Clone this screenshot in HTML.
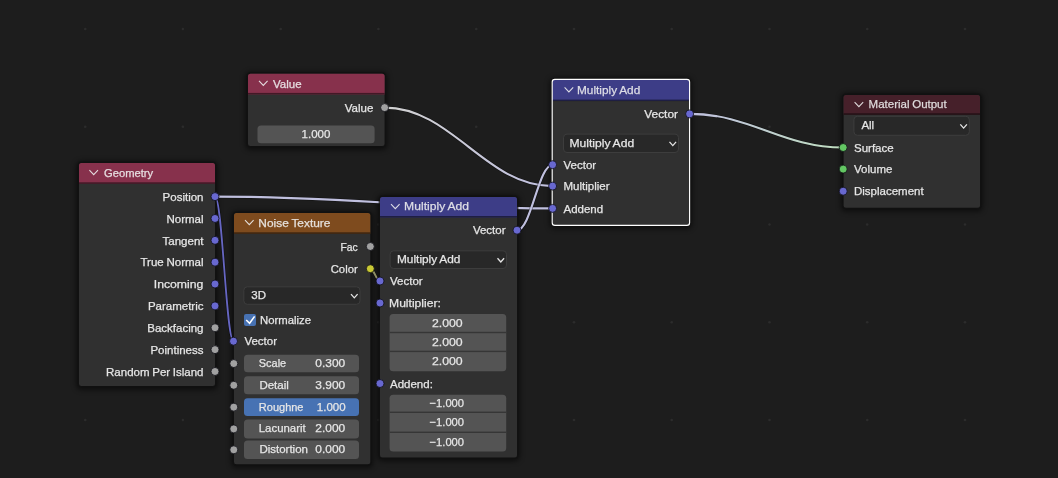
<!DOCTYPE html>
<html><head><meta charset="utf-8"><style>
html,body{margin:0;padding:0;background:#1d1d1d;width:1058px;height:478px;overflow:hidden}
svg{display:block}
</style></head><body>
<svg width="1058" height="478" viewBox="0 0 1058 478" font-family='"Liberation Sans", sans-serif'>
<defs><filter id="sh" x="-20%" y="-20%" width="140%" height="140%"><feGaussianBlur stdDeviation="2.5"/></filter></defs>
<rect width="1058" height="478" fill="#1d1d1d"/>
<circle cx="85.2" cy="29.0" r="1.3" fill="#2c2c2c"/><circle cx="85.2" cy="126.8" r="1.3" fill="#2c2c2c"/><circle cx="85.2" cy="224.5" r="1.3" fill="#2c2c2c"/><circle cx="85.2" cy="322.2" r="1.3" fill="#2c2c2c"/><circle cx="85.2" cy="420.0" r="1.3" fill="#2c2c2c"/><circle cx="182.9" cy="29.0" r="1.3" fill="#2c2c2c"/><circle cx="182.9" cy="126.8" r="1.3" fill="#2c2c2c"/><circle cx="182.9" cy="224.5" r="1.3" fill="#2c2c2c"/><circle cx="182.9" cy="322.2" r="1.3" fill="#2c2c2c"/><circle cx="182.9" cy="420.0" r="1.3" fill="#2c2c2c"/><circle cx="280.7" cy="29.0" r="1.3" fill="#2c2c2c"/><circle cx="280.7" cy="126.8" r="1.3" fill="#2c2c2c"/><circle cx="280.7" cy="224.5" r="1.3" fill="#2c2c2c"/><circle cx="280.7" cy="322.2" r="1.3" fill="#2c2c2c"/><circle cx="280.7" cy="420.0" r="1.3" fill="#2c2c2c"/><circle cx="378.4" cy="29.0" r="1.3" fill="#2c2c2c"/><circle cx="378.4" cy="126.8" r="1.3" fill="#2c2c2c"/><circle cx="378.4" cy="224.5" r="1.3" fill="#2c2c2c"/><circle cx="378.4" cy="322.2" r="1.3" fill="#2c2c2c"/><circle cx="378.4" cy="420.0" r="1.3" fill="#2c2c2c"/><circle cx="476.2" cy="29.0" r="1.3" fill="#2c2c2c"/><circle cx="476.2" cy="126.8" r="1.3" fill="#2c2c2c"/><circle cx="476.2" cy="224.5" r="1.3" fill="#2c2c2c"/><circle cx="476.2" cy="322.2" r="1.3" fill="#2c2c2c"/><circle cx="476.2" cy="420.0" r="1.3" fill="#2c2c2c"/><circle cx="574.0" cy="29.0" r="1.3" fill="#2c2c2c"/><circle cx="574.0" cy="126.8" r="1.3" fill="#2c2c2c"/><circle cx="574.0" cy="224.5" r="1.3" fill="#2c2c2c"/><circle cx="574.0" cy="322.2" r="1.3" fill="#2c2c2c"/><circle cx="574.0" cy="420.0" r="1.3" fill="#2c2c2c"/><circle cx="671.7" cy="29.0" r="1.3" fill="#2c2c2c"/><circle cx="671.7" cy="126.8" r="1.3" fill="#2c2c2c"/><circle cx="671.7" cy="224.5" r="1.3" fill="#2c2c2c"/><circle cx="671.7" cy="322.2" r="1.3" fill="#2c2c2c"/><circle cx="671.7" cy="420.0" r="1.3" fill="#2c2c2c"/><circle cx="769.5" cy="29.0" r="1.3" fill="#2c2c2c"/><circle cx="769.5" cy="126.8" r="1.3" fill="#2c2c2c"/><circle cx="769.5" cy="224.5" r="1.3" fill="#2c2c2c"/><circle cx="769.5" cy="322.2" r="1.3" fill="#2c2c2c"/><circle cx="769.5" cy="420.0" r="1.3" fill="#2c2c2c"/><circle cx="867.2" cy="29.0" r="1.3" fill="#2c2c2c"/><circle cx="867.2" cy="126.8" r="1.3" fill="#2c2c2c"/><circle cx="867.2" cy="224.5" r="1.3" fill="#2c2c2c"/><circle cx="867.2" cy="322.2" r="1.3" fill="#2c2c2c"/><circle cx="867.2" cy="420.0" r="1.3" fill="#2c2c2c"/><circle cx="965.0" cy="29.0" r="1.3" fill="#2c2c2c"/><circle cx="965.0" cy="126.8" r="1.3" fill="#2c2c2c"/><circle cx="965.0" cy="224.5" r="1.3" fill="#2c2c2c"/><circle cx="965.0" cy="322.2" r="1.3" fill="#2c2c2c"/><circle cx="965.0" cy="420.0" r="1.3" fill="#2c2c2c"/><circle cx="1062.7" cy="29.0" r="1.3" fill="#2c2c2c"/><circle cx="1062.7" cy="126.8" r="1.3" fill="#2c2c2c"/><circle cx="1062.7" cy="224.5" r="1.3" fill="#2c2c2c"/><circle cx="1062.7" cy="322.2" r="1.3" fill="#2c2c2c"/><circle cx="1062.7" cy="420.0" r="1.3" fill="#2c2c2c"/>
<g filter="url(#sh)"><rect x="245" y="71.7" width="142.60000000000002" height="78.3" rx="5.5" fill="#000" opacity="0.5"/><rect x="76" y="161" width="142" height="229" rx="5.5" fill="#000" opacity="0.5"/><rect x="231" y="211" width="142.3" height="257.3" rx="5.5" fill="#000" opacity="0.5"/><rect x="377" y="195" width="143" height="266.4" rx="5.5" fill="#000" opacity="0.5"/><rect x="549.4" y="77.6" width="143.0" height="151.6" rx="5.5" fill="#000" opacity="0.5"/><rect x="840.6" y="93" width="142.39999999999998" height="118.80000000000001" rx="5.5" fill="#000" opacity="0.5"/></g>
<path d="M384.6 107.6C451.8 107.6 485.40000000000003 186.1 552.6 186.1" fill="none" stroke="#000" stroke-opacity="0.45" stroke-width="3.3"/><linearGradient id="g1" gradientUnits="userSpaceOnUse" x1="384.6" y1="107.6" x2="552.6" y2="186.1"><stop offset="0" stop-color="#d1d1d1"/><stop offset="1" stop-color="#c0c0df"/></linearGradient><path d="M384.6 107.6C451.8 107.6 485.40000000000003 186.1 552.6 186.1" fill="none" stroke="url(#g1)" stroke-width="2.1"/><path d="M215 196.6C350.04 196.6 417.56 208.4 552.6 208.4" fill="none" stroke="#000" stroke-opacity="0.45" stroke-width="3.3"/><linearGradient id="g2" gradientUnits="userSpaceOnUse" x1="215" y1="196.6" x2="552.6" y2="208.4"><stop offset="0" stop-color="#c0c0df"/><stop offset="1" stop-color="#c0c0df"/></linearGradient><path d="M215 196.6C350.04 196.6 417.56 208.4 552.6 208.4" fill="none" stroke="url(#g2)" stroke-width="2.1"/><path d="M215 196.6C222.4 196.6 226.1 341.2 233.5 341.2" fill="none" stroke="#000" stroke-opacity="0.45" stroke-width="3.0"/><path d="M215 196.6C222.4 196.6 226.1 341.2 233.5 341.2" fill="none" stroke="#6666c2" stroke-width="1.8"/><path d="M370.3 268.7C374.18 268.7 376.12 281 380 281" fill="none" stroke="#000" stroke-opacity="0.45" stroke-width="3.2"/><path d="M370.3 268.7C374.18 268.7 376.12 281 380 281" fill="none" stroke="#8e8e66" stroke-width="2"/><path d="M517 230.2C531.24 230.2 538.36 164.7 552.6 164.7" fill="none" stroke="#000" stroke-opacity="0.45" stroke-width="3.3"/><linearGradient id="g3" gradientUnits="userSpaceOnUse" x1="517" y1="230.2" x2="552.6" y2="164.7"><stop offset="0" stop-color="#c0c0df"/><stop offset="1" stop-color="#c0c0df"/></linearGradient><path d="M517 230.2C531.24 230.2 538.36 164.7 552.6 164.7" fill="none" stroke="url(#g3)" stroke-width="2.1"/><path d="M689.6 113.9C751.0400000000001 113.9 781.76 147.5 843.2 147.5" fill="none" stroke="#000" stroke-opacity="0.45" stroke-width="3.3"/><linearGradient id="g4" gradientUnits="userSpaceOnUse" x1="689.6" y1="113.9" x2="843.2" y2="147.5"><stop offset="0" stop-color="#c0c0df"/><stop offset="1" stop-color="#bfddbf"/></linearGradient><path d="M689.6 113.9C751.0400000000001 113.9 781.76 147.5 843.2 147.5" fill="none" stroke="url(#g4)" stroke-width="2.1"/>
<rect x="246.6" y="72.3" width="139.40000000000003" height="75.1" rx="3.9" fill="#111" opacity="0.75"/>
<rect x="248" y="73.7" width="136.60000000000002" height="72.3" rx="2.5" fill="#303030"/>
<path d="M248 94.4V76.2A2.5 2.5 0 0 1 250.5 73.7H382.1A2.5 2.5 0 0 1 384.6 76.2V94.4Z" fill="#87314c"/>
<rect x="248" y="92.9" width="136.60000000000002" height="1.5" fill="#000" opacity="0.5"/>
<path d="M259 80.9L263.3 85.4L267.6 80.9" fill="none" stroke="#e6dde0" stroke-width="1.05"/>
<text id="t0" x="273" y="87.7" text-anchor="start" fill="#e6dde0" stroke="#e6dde0" stroke-width="0.25" font-size="11.5" word-spacing="-0.5">Value</text><text id="t1" x="373.3" y="112" text-anchor="end" fill="#e6e6e6" stroke="#e6e6e6" stroke-width="0.25" font-size="11.5" word-spacing="-0.5">Value</text><rect x="257.5" y="125.5" width="117.10000000000002" height="17.69999999999999" rx="3.5" fill="#545454"/><text id="t2" x="316" y="138" text-anchor="middle" fill="#e6e6e6" stroke="#e6e6e6" stroke-width="0.25" font-size="11.5" word-spacing="-0.5">1.000</text><circle cx="384.6" cy="107.6" r="4.0" fill="#a1a1a1" stroke="#0e0e14" stroke-width="0.8"/><rect x="77.6" y="161.6" width="138.8" height="225.8" rx="3.9" fill="#111" opacity="0.75"/>
<rect x="79" y="163" width="136" height="223" rx="2.5" fill="#303030"/>
<path d="M79 183.8V165.5A2.5 2.5 0 0 1 81.5 163H212.5A2.5 2.5 0 0 1 215 165.5V183.8Z" fill="#87314c"/>
<rect x="79" y="182.3" width="136" height="1.5" fill="#000" opacity="0.5"/>
<path d="M89.4 170.2L93.7 174.7L98.0 170.2" fill="none" stroke="#e6dde0" stroke-width="1.05"/>
<text id="t3" x="104.1" y="177" text-anchor="start" fill="#e6dde0" stroke="#e6dde0" stroke-width="0.25" font-size="11.5" word-spacing="-0.5" textLength="49.11" lengthAdjust="spacingAndGlyphs">Geometry</text><text id="t4" x="203.5" y="200.79999999999998" text-anchor="end" fill="#e6e6e6" stroke="#e6e6e6" stroke-width="0.25" font-size="11.5" word-spacing="-0.5">Position</text><circle cx="215" cy="196.6" r="4.0" fill="#6868d0" stroke="#0e0e14" stroke-width="0.8"/><text id="t5" x="203.5" y="222.65999999999997" text-anchor="end" fill="#e6e6e6" stroke="#e6e6e6" stroke-width="0.25" font-size="11.5" word-spacing="-0.5">Normal</text><circle cx="215" cy="218.45999999999998" r="4.0" fill="#6868d0" stroke="#0e0e14" stroke-width="0.8"/><text id="t6" x="203.5" y="244.51999999999998" text-anchor="end" fill="#e6e6e6" stroke="#e6e6e6" stroke-width="0.25" font-size="11.5" word-spacing="-0.5">Tangent</text><circle cx="215" cy="240.32" r="4.0" fill="#6868d0" stroke="#0e0e14" stroke-width="0.8"/><text id="t7" x="203.5" y="266.38" text-anchor="end" fill="#e6e6e6" stroke="#e6e6e6" stroke-width="0.25" font-size="11.5" word-spacing="-0.5">True Normal</text><circle cx="215" cy="262.18" r="4.0" fill="#6868d0" stroke="#0e0e14" stroke-width="0.8"/><text id="t8" x="203.33" y="288.23999999999995" text-anchor="end" fill="#e6e6e6" stroke="#e6e6e6" stroke-width="0.25" font-size="11.5" word-spacing="-0.5" textLength="49.58" lengthAdjust="spacingAndGlyphs">Incoming</text><circle cx="215" cy="284.03999999999996" r="4.0" fill="#6868d0" stroke="#0e0e14" stroke-width="0.8"/><text id="t9" x="203.5" y="310.09999999999997" text-anchor="end" fill="#e6e6e6" stroke="#e6e6e6" stroke-width="0.25" font-size="11.5" word-spacing="-0.5">Parametric</text><circle cx="215" cy="305.9" r="4.0" fill="#6868d0" stroke="#0e0e14" stroke-width="0.8"/><text id="t10" x="203.5" y="331.96" text-anchor="end" fill="#e6e6e6" stroke="#e6e6e6" stroke-width="0.25" font-size="11.5" word-spacing="-0.5">Backfacing</text><circle cx="215" cy="327.76" r="4.0" fill="#a1a1a1" stroke="#0e0e14" stroke-width="0.8"/><text id="t11" x="203.5" y="353.82" text-anchor="end" fill="#e6e6e6" stroke="#e6e6e6" stroke-width="0.25" font-size="11.5" word-spacing="-0.5">Pointiness</text><circle cx="215" cy="349.62" r="4.0" fill="#a1a1a1" stroke="#0e0e14" stroke-width="0.8"/><text id="t12" x="203.5" y="375.68" text-anchor="end" fill="#e6e6e6" stroke="#e6e6e6" stroke-width="0.25" font-size="11.5" word-spacing="-0.5">Random Per Island</text><circle cx="215" cy="371.48" r="4.0" fill="#a1a1a1" stroke="#0e0e14" stroke-width="0.8"/><rect x="232.6" y="211.6" width="139.10000000000002" height="254.10000000000002" rx="3.9" fill="#111" opacity="0.75"/>
<rect x="234" y="213" width="136.3" height="251.3" rx="2.5" fill="#303030"/>
<path d="M234 233.8V215.5A2.5 2.5 0 0 1 236.5 213H367.8A2.5 2.5 0 0 1 370.3 215.5V233.8Z" fill="#7e4b1e"/>
<rect x="234" y="232.3" width="136.3" height="1.5" fill="#000" opacity="0.5"/>
<path d="M245 220.2L249.3 224.7L253.6 220.2" fill="none" stroke="#e5e0db" stroke-width="1.05"/>
<text id="t13" x="258.36" y="227" text-anchor="start" fill="#e5e0db" stroke="#e5e0db" stroke-width="0.25" font-size="11.5" word-spacing="-0.5" textLength="72.07" lengthAdjust="spacingAndGlyphs">Noise Texture</text><text id="t14" x="357.72" y="250.7" text-anchor="end" fill="#e6e6e6" stroke="#e6e6e6" stroke-width="0.25" font-size="11.5" word-spacing="-0.5" textLength="17.25" lengthAdjust="spacingAndGlyphs">Fac</text><circle cx="370.3" cy="246.5" r="4.0" fill="#a1a1a1" stroke="#0e0e14" stroke-width="0.8"/><text id="t15" x="357.7" y="272.9" text-anchor="end" fill="#e6e6e6" stroke="#e6e6e6" stroke-width="0.25" font-size="11.5" word-spacing="-0.5" textLength="26.98" lengthAdjust="spacingAndGlyphs">Color</text><circle cx="370.3" cy="268.7" r="4.0" fill="#c9c935" stroke="#0e0e14" stroke-width="0.8"/><rect x="243.8" y="286.8" width="116.19999999999999" height="17.5" rx="3.5" fill="#282828" stroke="#3d3d3d" stroke-width="1"/><text id="t16" x="251.3" y="299.05" text-anchor="start" fill="#e6e6e6" stroke="#e6e6e6" stroke-width="0.25" font-size="11.5" word-spacing="-0.5">3D</text><path d="M351.0 294.15000000000003L354.3 297.85L357.6 294.15000000000003" fill="none" stroke="#e6e6e6" stroke-width="1.3"/><rect x="244" y="314" width="12" height="12" rx="2" fill="#4772b3"/><path d="M246.2 320L249.6 323.3L254.6 316.4" fill="none" stroke="#fff" stroke-width="1.6"/><text id="t17" x="260.01" y="324" text-anchor="start" fill="#e6e6e6" stroke="#e6e6e6" stroke-width="0.25" font-size="11.5" word-spacing="-0.5" textLength="50.95" lengthAdjust="spacingAndGlyphs">Normalize</text><text id="t18" x="244.4" y="345.2" text-anchor="start" fill="#e6e6e6" stroke="#e6e6e6" stroke-width="0.25" font-size="11.5" word-spacing="-0.5">Vector</text><circle cx="233.5" cy="341.2" r="4.0" fill="#6868d0" stroke="#0e0e14" stroke-width="0.8"/><rect x="244" y="354.8" width="115" height="17.5" rx="3.5" fill="#545454"/><text id="t19" x="258.83" y="367.05" text-anchor="start" fill="#e6e6e6" stroke="#e6e6e6" stroke-width="0.25" font-size="11.5" word-spacing="-0.5" textLength="27.34" lengthAdjust="spacingAndGlyphs">Scale</text><text id="t20" x="345.18" y="367.05" text-anchor="end" fill="#e6e6e6" stroke="#e6e6e6" stroke-width="0.25" font-size="11.5" word-spacing="-0.5" textLength="29.87" lengthAdjust="spacingAndGlyphs">0.300</text><circle cx="233.8" cy="363.55" r="4.0" fill="#a1a1a1" stroke="#0e0e14" stroke-width="0.8"/><rect x="244" y="376.3" width="115" height="17.899999999999977" rx="3.5" fill="#545454"/><text id="t21" x="259.4" y="388.75" text-anchor="start" fill="#e6e6e6" stroke="#e6e6e6" stroke-width="0.25" font-size="11.5" word-spacing="-0.5">Detail</text><text id="t22" x="345.18" y="388.75" text-anchor="end" fill="#e6e6e6" stroke="#e6e6e6" stroke-width="0.25" font-size="11.5" word-spacing="-0.5" textLength="29.87" lengthAdjust="spacingAndGlyphs">3.900</text><circle cx="233.8" cy="385.25" r="4.0" fill="#a1a1a1" stroke="#0e0e14" stroke-width="0.8"/><rect x="244" y="398.3" width="115" height="17.69999999999999" rx="3.5" fill="#4772b3"/><text id="t23" x="258.83" y="410.65" text-anchor="start" fill="#e6e6e6" stroke="#e6e6e6" stroke-width="0.25" font-size="11.5" word-spacing="-0.5" textLength="44.66" lengthAdjust="spacingAndGlyphs">Roughne</text><text id="t24" x="345.6" y="410.65" text-anchor="end" fill="#e6e6e6" stroke="#e6e6e6" stroke-width="0.25" font-size="11.5" word-spacing="-0.5">1.000</text><circle cx="233.8" cy="407.15" r="4.0" fill="#a1a1a1" stroke="#0e0e14" stroke-width="0.8"/><rect x="244" y="419.4" width="115" height="19.0" rx="3.5" fill="#545454"/><text id="t25" x="258.81" y="432.4" text-anchor="start" fill="#e6e6e6" stroke="#e6e6e6" stroke-width="0.25" font-size="11.5" word-spacing="-0.5" textLength="46.81" lengthAdjust="spacingAndGlyphs">Lacunarit</text><text id="t26" x="345.18" y="432.4" text-anchor="end" fill="#e6e6e6" stroke="#e6e6e6" stroke-width="0.25" font-size="11.5" word-spacing="-0.5" textLength="29.87" lengthAdjust="spacingAndGlyphs">2.000</text><circle cx="233.8" cy="428.9" r="4.0" fill="#a1a1a1" stroke="#0e0e14" stroke-width="0.8"/><rect x="244" y="440.5" width="115" height="18.600000000000023" rx="3.5" fill="#545454"/><text id="t27" x="259.4" y="453.3" text-anchor="start" fill="#e6e6e6" stroke="#e6e6e6" stroke-width="0.25" font-size="11.5" word-spacing="-0.5">Distortion</text><text id="t28" x="345.18" y="453.3" text-anchor="end" fill="#e6e6e6" stroke="#e6e6e6" stroke-width="0.25" font-size="11.5" word-spacing="-0.5" textLength="29.87" lengthAdjust="spacingAndGlyphs">0.000</text><circle cx="233.8" cy="449.8" r="4.0" fill="#a1a1a1" stroke="#0e0e14" stroke-width="0.8"/><rect x="378.6" y="195.6" width="139.8" height="263.2" rx="3.9" fill="#111" opacity="0.75"/>
<rect x="380" y="197" width="137" height="260.4" rx="2.5" fill="#303030"/>
<path d="M380 217.5V199.5A2.5 2.5 0 0 1 382.5 197H514.5A2.5 2.5 0 0 1 517 199.5V217.5Z" fill="#3d3d87"/>
<rect x="380" y="216" width="137" height="1.5" fill="#000" opacity="0.5"/>
<path d="M391 204.2L395.3 208.7L399.6 204.2" fill="none" stroke="#dedee6" stroke-width="1.05"/>
<text id="t29" x="404.14" y="209.9" text-anchor="start" fill="#dedee6" stroke="#dedee6" stroke-width="0.25" font-size="11.5" word-spacing="-0.5" textLength="64.90" lengthAdjust="spacingAndGlyphs">Multiply Add</text><text id="t30" x="505.5" y="234.39999999999998" text-anchor="end" fill="#e6e6e6" stroke="#e6e6e6" stroke-width="0.25" font-size="11.5" word-spacing="-0.5">Vector</text><circle cx="517" cy="230.2" r="4.0" fill="#6868d0" stroke="#0e0e14" stroke-width="0.8"/><rect x="390.1" y="250.8" width="116.39999999999998" height="17.69999999999999" rx="3.5" fill="#282828" stroke="#3d3d3d" stroke-width="1"/><text id="t31" x="396.99" y="263.15" text-anchor="start" fill="#e6e6e6" stroke="#e6e6e6" stroke-width="0.25" font-size="11.5" word-spacing="-0.5" textLength="63.43" lengthAdjust="spacingAndGlyphs">Multiply Add</text><path d="M497.5 258.25L500.8 261.95L504.1 258.25" fill="none" stroke="#e6e6e6" stroke-width="1.3"/><text id="t32" x="390" y="285.2" text-anchor="start" fill="#e6e6e6" stroke="#e6e6e6" stroke-width="0.25" font-size="11.5" word-spacing="-0.5">Vector</text><circle cx="380" cy="281" r="4.0" fill="#6868d0" stroke="#0e0e14" stroke-width="0.8"/><text id="t33" x="389.05" y="307.2" text-anchor="start" fill="#e6e6e6" stroke="#e6e6e6" stroke-width="0.25" font-size="11.5" word-spacing="-0.5" textLength="51.84" lengthAdjust="spacingAndGlyphs">Multiplier:</text><circle cx="380" cy="303" r="4.0" fill="#6868d0" stroke="#0e0e14" stroke-width="0.8"/><rect x="389.6" y="314" width="116.59999999999997" height="57.30000000000001" rx="3.5" fill="#545454"/><text id="t34" x="447.34" y="326.95" text-anchor="middle" fill="#e6e6e6" stroke="#e6e6e6" stroke-width="0.25" font-size="11.5" word-spacing="-0.5" textLength="30.73" lengthAdjust="spacingAndGlyphs">2.000</text><text id="t35" x="447.34" y="345.65" text-anchor="middle" fill="#e6e6e6" stroke="#e6e6e6" stroke-width="0.25" font-size="11.5" word-spacing="-0.5" textLength="30.73" lengthAdjust="spacingAndGlyphs">2.000</text><rect x="389.6" y="331.8" width="116.59999999999997" height="1.4" fill="#363636"/><text id="t36" x="447.34" y="365.05" text-anchor="middle" fill="#e6e6e6" stroke="#e6e6e6" stroke-width="0.25" font-size="11.5" word-spacing="-0.5" textLength="30.73" lengthAdjust="spacingAndGlyphs">2.000</text><rect x="389.6" y="350.7" width="116.59999999999997" height="1.4" fill="#363636"/><text id="t37" x="390" y="387.7" text-anchor="start" fill="#e6e6e6" stroke="#e6e6e6" stroke-width="0.25" font-size="11.5" word-spacing="-0.5">Addend:</text><circle cx="380" cy="383.5" r="4.0" fill="#6868d0" stroke="#0e0e14" stroke-width="0.8"/><rect x="389.6" y="394.8" width="116.59999999999997" height="56.599999999999966" rx="3.5" fill="#545454"/><text id="t38" x="446.8" y="407.25" text-anchor="middle" fill="#e6e6e6" stroke="#e6e6e6" stroke-width="0.25" font-size="11.5" word-spacing="-0.5" textLength="34.51" lengthAdjust="spacingAndGlyphs">−1.000</text><text id="t39" x="446.8" y="426.0" text-anchor="middle" fill="#e6e6e6" stroke="#e6e6e6" stroke-width="0.25" font-size="11.5" word-spacing="-0.5" textLength="34.51" lengthAdjust="spacingAndGlyphs">−1.000</text><rect x="389.6" y="411.6" width="116.59999999999997" height="1.4" fill="#363636"/><text id="t40" x="446.8" y="445.55" text-anchor="middle" fill="#e6e6e6" stroke="#e6e6e6" stroke-width="0.25" font-size="11.5" word-spacing="-0.5" textLength="34.51" lengthAdjust="spacingAndGlyphs">−1.000</text><rect x="389.6" y="431.6" width="116.59999999999997" height="1.4" fill="#363636"/><rect x="551.0" y="78.19999999999999" width="139.8" height="148.4" rx="3.9" fill="#111" opacity="0.75"/>
<rect x="552.4" y="79.6" width="137.0" height="145.6" rx="2.5" fill="#303030"/>
<path d="M552.4 101.1V82.1A2.5 2.5 0 0 1 554.9 79.6H686.9A2.5 2.5 0 0 1 689.4 82.1V101.1Z" fill="#3d3d87"/>
<rect x="552.4" y="99.6" width="137.0" height="1.5" fill="#000" opacity="0.5"/>
<path d="M564.6 87.39999999999999L568.9 91.89999999999999L573.2 87.39999999999999" fill="none" stroke="#dedee6" stroke-width="1.05"/>
<text id="t41" x="576.99" y="94.0" text-anchor="start" fill="#dedee6" stroke="#dedee6" stroke-width="0.25" font-size="11.5" word-spacing="-0.5" textLength="63.23" lengthAdjust="spacingAndGlyphs">Multiply Add</text>
<rect x="552.1999999999999" y="79.39999999999999" width="137.4" height="146.0" rx="2.7" fill="none" stroke="#ffffff" stroke-width="1.15"/><text id="t42" x="678.0" y="118.10000000000001" text-anchor="end" fill="#e6e6e6" stroke="#e6e6e6" stroke-width="0.25" font-size="11.5" word-spacing="-0.5" textLength="33.70" lengthAdjust="spacingAndGlyphs">Vector</text><circle cx="689.6" cy="113.9" r="4.0" fill="#6868d0" stroke="#0e0e14" stroke-width="0.8"/><rect x="563.5" y="134.1" width="115" height="18.400000000000006" rx="3.5" fill="#282828" stroke="#3d3d3d" stroke-width="1"/><text id="t43" x="569.45" y="146.8" text-anchor="start" fill="#e6e6e6" stroke="#e6e6e6" stroke-width="0.25" font-size="11.5" word-spacing="-0.5" textLength="64.69" lengthAdjust="spacingAndGlyphs">Multiply Add</text><path d="M669.5 141.9L672.8 145.6L676.1 141.9" fill="none" stroke="#e6e6e6" stroke-width="1.3"/><text id="t44" x="563.5" y="168.89999999999998" text-anchor="start" fill="#e6e6e6" stroke="#e6e6e6" stroke-width="0.25" font-size="11.5" word-spacing="-0.5">Vector</text><circle cx="552.6" cy="164.7" r="4.0" fill="#6868d0" stroke="#0e0e14" stroke-width="0.8"/><text id="t45" x="563.5" y="190.29999999999998" text-anchor="start" fill="#e6e6e6" stroke="#e6e6e6" stroke-width="0.25" font-size="11.5" word-spacing="-0.5">Multiplier</text><circle cx="552.6" cy="186.1" r="4.0" fill="#6868d0" stroke="#0e0e14" stroke-width="0.8"/><text id="t46" x="563.5" y="212.6" text-anchor="start" fill="#e6e6e6" stroke="#e6e6e6" stroke-width="0.25" font-size="11.5" word-spacing="-0.5">Addend</text><circle cx="552.6" cy="208.4" r="4.0" fill="#6868d0" stroke="#0e0e14" stroke-width="0.8"/><rect x="842.2" y="93.6" width="139.2" height="115.60000000000001" rx="3.9" fill="#111" opacity="0.75"/>
<rect x="843.6" y="95" width="136.39999999999998" height="112.80000000000001" rx="2.5" fill="#303030"/>
<path d="M843.6 114.8V97.5A2.5 2.5 0 0 1 846.1 95H977.5A2.5 2.5 0 0 1 980 97.5V114.8Z" fill="#46202a"/>
<rect x="843.6" y="113.3" width="136.39999999999998" height="1.5" fill="#000" opacity="0.5"/>
<path d="M854.6 102.2L858.9 106.7L863.2 102.2" fill="none" stroke="#dfdbdc" stroke-width="1.05"/>
<text id="t47" x="868.6" y="108" text-anchor="start" fill="#dfdbdc" stroke="#dfdbdc" stroke-width="0.25" font-size="11.5" word-spacing="-0.5">Material Output</text><rect x="853.9" y="116.3" width="115.39999999999998" height="19.000000000000014" rx="3.5" fill="#282828" stroke="#3d3d3d" stroke-width="1"/><text id="t48" x="861.4" y="129.3" text-anchor="start" fill="#e6e6e6" stroke="#e6e6e6" stroke-width="0.25" font-size="11.5" word-spacing="-0.5">All</text><path d="M960.3 124.4L963.5999999999999 128.1L966.9 124.4" fill="none" stroke="#e6e6e6" stroke-width="1.3"/><text id="t49" x="854" y="151.7" text-anchor="start" fill="#e6e6e6" stroke="#e6e6e6" stroke-width="0.25" font-size="11.5" word-spacing="-0.5">Surface</text><circle cx="843.2" cy="147.5" r="4.0" fill="#63c763" stroke="#0e0e14" stroke-width="0.8"/><text id="t50" x="854" y="173.29999999999998" text-anchor="start" fill="#e6e6e6" stroke="#e6e6e6" stroke-width="0.25" font-size="11.5" word-spacing="-0.5">Volume</text><circle cx="843.2" cy="169.1" r="4.0" fill="#63c763" stroke="#0e0e14" stroke-width="0.8"/><text id="t51" x="854" y="195.39999999999998" text-anchor="start" fill="#e6e6e6" stroke="#e6e6e6" stroke-width="0.25" font-size="11.5" word-spacing="-0.5">Displacement</text><circle cx="843.2" cy="191.2" r="4.0" fill="#6868d0" stroke="#0e0e14" stroke-width="0.8"/>
</svg>
</body></html>
